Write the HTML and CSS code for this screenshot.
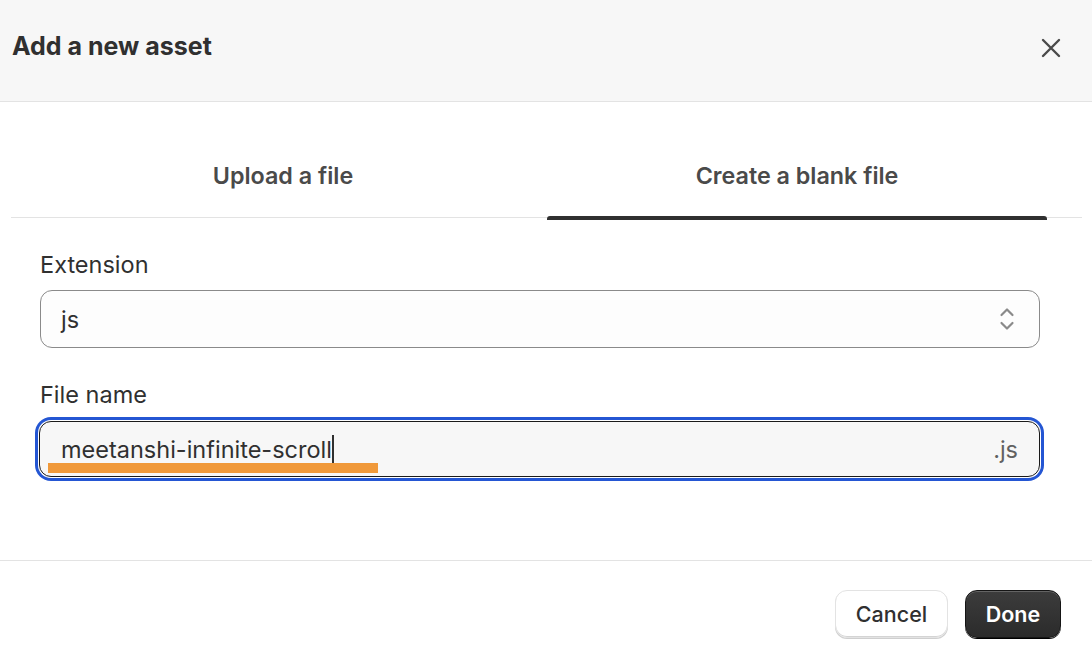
FILE: index.html
```html
<!DOCTYPE html>
<html>
<head>
<meta charset="utf-8">
<link rel="stylesheet" href="styles.css">
</head>
<body>
<div class="modal">
  <header class="header">
    <h1 class="title">Add a new asset</h1>
    <button class="close" aria-label="Close">
      <svg width="20" height="20" viewBox="0 0 20 20"><path d="M2 2 L18 18 M18 2 L2 18" stroke="#4a4a4a" stroke-width="2.4" stroke-linecap="round" fill="none"/></svg>
    </button>
  </header>
  <nav class="tabs">
    <div class="tab">Upload a file</div>
    <div class="tab active">Create a blank file</div>
  </nav>
  <section class="form">
    <label class="label">Extension</label>
    <div class="select">
      <span class="value">js</span>
      <svg class="chev" width="20" height="30" viewBox="0 0 20 30"><path d="M4.5 11 L10 5.5 L15.5 11 M4.5 19 L10 24.5 L15.5 19" stroke="#8a8a8a" stroke-width="2.2" stroke-linecap="round" stroke-linejoin="round" fill="none"/></svg>
    </div>
    <label class="label label2">File name</label>
    <div class="input">
      <span class="value">meetanshi-infinite-scroll</span><span class="caret"></span>
      <span class="suffix">.js</span>
      <span class="mark"></span>
    </div>
  </section>
  <footer class="footer">
    <button class="btn cancel">Cancel</button>
    <button class="btn done">Done</button>
  </footer>
</div>
</body>
</html>
```

FILE: styles.css
```css
* { box-sizing: border-box; }
html, body { margin: 0; padding: 0; background: #fff; }
body {
  font-family: Inter, "Noto Sans", sans-serif;
  color: #303030;
  width: 1092px;
  height: 668px;
  overflow: hidden;
}
.header {
  height: 102px;
  background: #f7f7f7;
  border-bottom: 1px solid #e3e3e3;
  display: flex;
  align-items: center;
  justify-content: space-between;
  padding: 0 31px 9px 12px;
}
.title {
  margin: 0;
  font-size: 25px;
  font-weight: 700;
  color: #303030;
  line-height: 30px;
}
.close {
  background: none;
  border: 0;
  padding: 0;
  width: 20px;
  height: 20px;
  display: flex;
  margin-top: 4px;
}
.tabs {
  margin: 0 10px 0 11px;
  height: 116px;
  border-bottom: 1px solid #e3e3e3;
  display: grid;
  grid-template-columns: 500px 500px;
  column-gap: 14px;
  padding-left: 22px;
}
.tab {
  position: relative;
  text-align: center;
  font-size: 23.3px;
  font-weight: 600;
  color: #4a4a4a;
  line-height: 28px;
  padding-top: 60px;
}
.tab.active::after {
  content: "";
  position: absolute;
  left: 0;
  right: 0;
  bottom: -3px;
  height: 4px;
  background: #303030;
  border-radius: 3px 3px 0 0;
}
.form {
  padding: 33px 52px 83px 40px;
  display: flex;
  flex-direction: column;
}
.label {
  font-size: 23.5px;
  line-height: 28px;
  color: #303030;
}
.label2 { margin-top: 33px; }
.select {
  margin-top: 11px;
  height: 58px;
  border: 1px solid #8a8a8a;
  border-radius: 12px;
  background: #fdfdfd;
  display: flex;
  align-items: center;
  justify-content: space-between;
  padding: 0 22px 0 20px;
}
.value {
  font-size: 23.5px;
  color: #303030;
}
.chev { display: block; }
.input {
  position: relative;
  margin-top: 12px;
  margin-left: -1px;
  height: 56px;
  border: 1px solid #1a1a1a;
  border-radius: 12px;
  background: #f7f7f7;
  box-shadow: 0 0 0 1px #ffffff, 0 0 0 4px #2456d3;
  display: flex;
  align-items: center;
  padding: 0 21px 0 21px;
}
.caret {
  display: inline-block;
  width: 2.5px;
  height: 28px;
  background: #303030;
  margin-left: 0;
}
.suffix {
  margin-left: auto;
  font-size: 23.5px;
  color: #616161;
}
.mark {
  position: absolute;
  left: 8px;
  top: 41px;
  width: 330px;
  height: 10px;
  background: #f0993a;
}
.footer {
  border-top: 1px solid #e3e3e3;
  height: 108px;
  display: flex;
  align-items: center;
  justify-content: flex-end;
  gap: 17px;
  padding: 0 31px 0 0;
}
.btn {
  font-family: Inter, "Noto Sans", sans-serif;
  font-size: 21.5px;
  font-weight: 600;
  height: 48px;
  border-radius: 12px;
  padding: 0;
  margin-top: -1px;
}
.cancel {
  width: 113px;
  background: #fff;
  color: #303030;
  font-weight: 500;
  border: 1px solid #e3e3e3;
  box-shadow: 0 1px 0 #cfcfcf, inset 0 -1px 0 #d4d4d4;
}
.done {
  width: 96px;
  color: #fff;
  background: linear-gradient(#3c3c3c, #2b2b2b);
  border: 1px solid #151515;
  box-shadow: inset 0 1px 0 rgba(255,255,255,0.2), 0 1px 0 #000;
}
```
